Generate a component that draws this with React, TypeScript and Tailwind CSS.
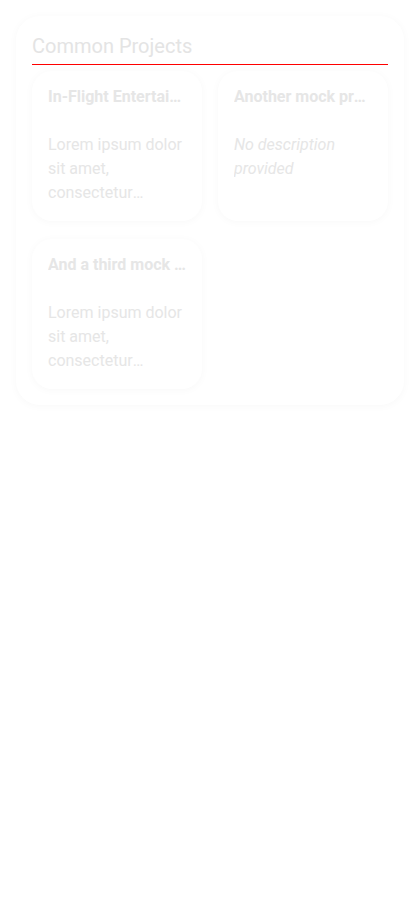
import React from "react";

const projects = [
  { title: "In-Flight Entertainment System", desc: "Lorem ipsum dolor sit amet, consectetur adipiscing elit", italic: false },
  { title: "Another mock project", desc: "No description provided", italic: true },
  { title: "And a third mock project", desc: "Lorem ipsum dolor sit amet, consectetur adipiscing elit", italic: false },
];

export default function App() {
  return (
    <div className="min-h-[920px] w-full bg-white p-4" style={{ fontFamily: "Roboto, 'Liberation Sans', sans-serif" }}>
      <div className="rounded-[24px] bg-white p-4 shadow-[0_1px_8px_rgba(0,0,0,0.03)]">
        <h2 className="text-[20px] leading-[28px] text-[#e4e4e4]">Common Projects</h2>
        <div className="mt-1 h-px bg-[#ff0000]" />
        <div className="mt-[6px] grid grid-cols-2 gap-x-4 gap-y-[18px]">
          {projects.map((p) => (
            <div key={p.title} className="rounded-[20px] bg-white shadow-[0_1px_8px_rgba(0,0,0,0.03)] px-4 pt-4 pb-4 min-h-[150px]">
              <div className="text-[16px] leading-[20px] font-bold text-[#e6e6e6] truncate">{p.title}</div>
              <div
                className={`mt-[26px] text-[16px] leading-[24px] text-[#e6e6e6] ${p.italic ? "italic" : ""}`}
                style={{ display: "-webkit-box", WebkitLineClamp: 3, WebkitBoxOrient: "vertical", overflow: "hidden" }}
              >
                {p.desc}
              </div>
            </div>
          ))}
        </div>
      </div>
    </div>
  );
}
